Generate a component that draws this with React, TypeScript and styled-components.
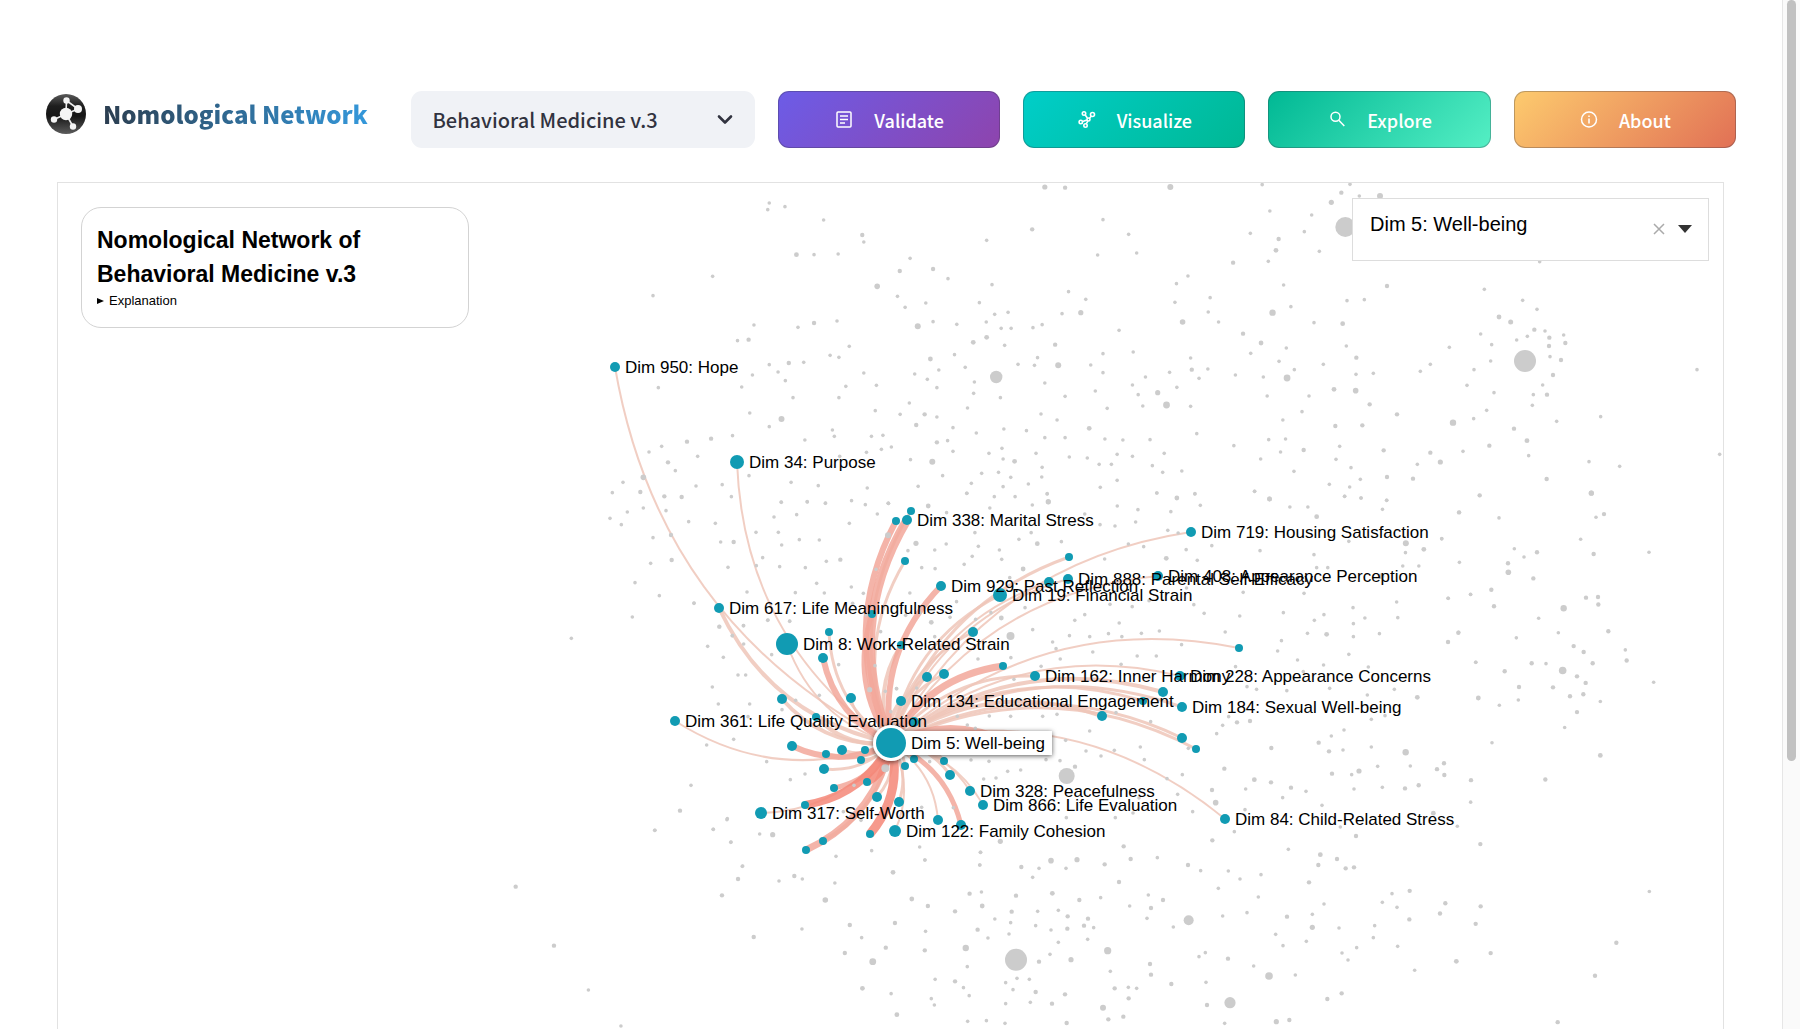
import React, { useState } from "react";
import styled, { createGlobalStyle } from "styled-components";

const GlobalStyle = createGlobalStyle`
  *, *::before, *::after { box-sizing: border-box; }
  body {
    margin: 0;
    background: #fff;
    color: #000;
    font-family: "Liberation Sans", Arial, sans-serif;
  }
`;

const uiFont = `"Noto Sans CJK JP", "Noto Sans", sans-serif`;

/* ---------- shell ---------- */

const Shell = styled.div`
  display: flex;
  height: 100vh;
  overflow: hidden;
`;

const Main = styled.main`
  flex: 1;
  min-width: 0;
  display: flex;
  flex-direction: column;
  padding: 91px 46px 0 45px;
`;

const ScrollRail = styled.div`
  width: 18px;
  padding: 0 4px;
  background: #fafafa;
  border-left: 1px solid #e6e6e6;
`;

const ScrollThumb = styled.div`
  height: 74%;
  border-radius: 5px;
  background: #c1c1c1;
`;

/* ---------- header ---------- */

const Header = styled.header`
  display: grid;
  grid-template-columns: 17fr 17fr 11fr 11fr 11fr 11fr;
  column-gap: 23px;
  height: 57px;
  margin-bottom: 34px;
  font-family: ${uiFont};
`;

const Brand = styled.a`
  display: flex;
  align-items: center;
  gap: 16px;
  height: 46px;
  text-decoration: none;
  white-space: nowrap;
`;

const BrandName = styled.span`
  font-size: 24px;
  line-height: 36px;
  font-weight: 900;
  color: transparent;
  background: linear-gradient(90deg, #2c3e50, #3498db);
  background-clip: text;
  -webkit-background-clip: text;
`;

const SelectWrap = styled.div`
  position: relative;
  display: grid;
`;

const VersionSelect = styled.select`
  appearance: none;
  width: 100%;
  padding: 0 56px 0 21px;
  border: 0;
  border-radius: 11px;
  background: #f0f2f6;
  color: #31333f;
  font: 500 20px / 28px ${uiFont};
`;

const SelectChevron = styled.svg`
  position: absolute;
  right: 22px;
  top: 21px;
  pointer-events: none;
`;

const NavButton = styled.button<{ $from: string; $to: string }>`
  display: flex;
  align-items: center;
  justify-content: center;
  gap: 20px;
  padding: 0;
  border: 1px solid rgba(49, 51, 63, 0.3);
  border-radius: 11px;
  background: linear-gradient(135deg, ${(p) => p.$from}, ${(p) => p.$to}) border-box;
  color: #fff;
  font: 500 18px / 28px ${uiFont};
  cursor: pointer;
`;

/* ---------- graph panel ---------- */

const Panel = styled.section`
  position: relative;
  flex: 1;
  min-height: 0;
  margin: 0 12px;
  border: 1px solid #e2e2e2;
  border-bottom: 0;
  overflow: hidden;
`;

const Graph = styled.svg`
  display: block;
  width: 100%;
  height: 100%;
`;

const NodeLabel = styled.text`
  font: 17px "Liberation Sans", Arial, sans-serif;
  fill: #000;
`;

const InfoCard = styled.aside`
  position: absolute;
  top: 24px;
  left: 23px;
  width: 388px;
  padding: 15px 15px 16px;
  border: 1px solid #d3d3d3;
  border-radius: 20px;
  background: #fff;
`;

const InfoTitle = styled.h1`
  max-width: 300px;
  margin: 0;
  font-size: 23px;
  line-height: 34px;
  font-weight: 700;
`;

const Explanation = styled.details`
  font-size: 13px;
  line-height: 20px;

  summary {
    display: flex;
    align-items: center;
    gap: 5px;
    list-style: none;
    cursor: pointer;
  }
`;

const DimPicker = styled.div`
  position: absolute;
  top: 15px;
  right: 14px;
  width: 357px;
  height: 63px;
  display: grid;
  border: 1px solid #ddd;
  background: #fff;
`;

const DimSelect = styled.select`
  appearance: none;
  width: 100%;
  padding: 0 90px 11px 17px;
  border: 0;
  background: transparent;
  color: #000;
  font: 20px / 24px "Liberation Sans", Arial, sans-serif;
`;

const ClearButton = styled.button`
  position: absolute;
  right: 41px;
  top: 21px;
  display: grid;
  place-items: center;
  width: 16px;
  height: 18px;
  padding: 0;
  border: 0;
  background: transparent;
  cursor: pointer;
`;

const DimCaret = styled.svg`
  position: absolute;
  right: 16px;
  top: 26px;
  pointer-events: none;
`;

/* ---------- graph data ---------- */

type Cluster = { x: number; y: number; sx: number; sy: number; dots: string };

// Background dimensions, grouped in clusters: "x,y" or "x,y,radius", in cluster units.
const clusters: Cluster[] = [
  {
    x: 700, y: 175, sx: 2.613, sy: 3,
    dots: `901,39,2.6 954,41,2.2 1229,39,3 1469,32 181,87 177,107 222,98 323,138 424,183,2.2 428,204 252,242,2.4 298,242 361,240 33,307
    549,253 522,291,2.2 609,285,2.2 648,314 463,337,2.8 763,332 749,199 868,166,2.2 1053,137 1120,181 1141,237 1039,243 1489,111 1438,178
    1512,195,2.2 1505,229,2.4 1393,266,2.2 1485,262 1525,333 1275,306 1245,329 1241,385 1333,371 1328,414 1355,444 1261,444,2.8 1496,416,3.2 1544,398
    516,367 536,400 590,387 730,386 569,457,3 609,443 671,451 770,421 805,415 748,444 787,463 813,463 870,461 894,452 946,419 995,416,2.6
    963,353 1008,376 1095,469 1419,479,2.2 1466,507,2.4 1439,538 1532,522 141,453 256,460 298,447,2.2 358,441 98,500 127,497,2.2 390,517
    340,544 363,550 714,505,2.4 749,490,2.4 796,514 928,512,2.2 882,551 874,574 936,574,3 831,571 774,609,6.2 693,580 665,542 602,555,2.4
    624,588 594,616 561,600 619,641 717,624 715,658 785,671 699,702 901,627 954,667 1033,651 1021,573 1053,539 1053,596 1132,534
    1282,552 1285,587,2.2 1327,585 1304,613 1227,595 1164,609 1130,633 1145,662 1196,656,2.6 1246,640 1219,693,3.4 1157,696 1282,697 1064,703
    1399,603 1472,609 1513,562 1553,587 1534,612,3.4 1482,666 1523,738 181,572 232,567,2.2 271,565 204,594 223,620 137,603 109,639 428,597
    381,637 461,634 243,671 363,671 213,735,3 130,717 181,758 85,785 29,794,2.2 547,687 458,710 523,721 587,721,2.2 619,729 565,753,2.2
    346,768 351,787 274,798 448,787 478,784 500,819 474,826 435,835 365,847 661,761 722,777 794,765 853,770 619,805,2.2 647,800 661,832
    550,857 607,863,3 634,905 755,838 789,823 792,855 822,862,2.4 878,838 891,720 933,738 1017,763,2.4 901,791 954,791 1058,795 1105,798
    1176,797 1298,779 1395,815 1213,838 1130,847 1090,841 1012,852 965,849 1043,871 1075,871 1182,875 1209,895 1259,891 1486,797 1530,795
    1517,834 1465,855 1552,892 894,880 893,909 858,930 812,910 780,895 736,898 709,928 792,938 769,968 697,958 907,960 910,983,2.6
    1090,919 1046,940 1194,957 1246,972,2.4 1293,960 1449,952 1488,975,2.4 128,905 238,925 309,935 58,932 82,968 437,942 570,937 212,984 280,983 396,980 328,987 492,988`,
  },
  {
    x: 1300, y: 175, sx: 3, sy: 3,
    dots: `150,31 124,56,2.2 94,85,2.6 178,66 240,66,3 35,123 13,173 136,159,10 58,232 719,263 261,336,2.2 141,380 193,377 553,346
    668,379 711,406 42,446 128,449,2.4 597,429,2.4 632,444,2.5 703,467,2.2 735,471 682,487 650,498 748,491,2.2 791,483 796,507,2.2 747,516,2.2 750,548
    783,558,2.2 675,561,11 542,480 575,512 572,561 522,587 501,634 582,656 759,603,2.2 728,633 741,662,2.2 700,662 697,694 448,520 139,516 169,551,2.2
    70,571 168,601 220,598 361,592 391,571 102,646,2.4 167,650,2.8 27,666 6,713 209,691,2.2 291,721,2.2 106,756,2.2 187,754,2.2 459,746,3.2
    521,734 560,709 642,764,2.2 681,800,2.4 686,845 770,742 902,728 1191,587 1259,841 568,815,2.2 489,832 421,864,2.6 391,836,2.2 352,871
    339,914,2.2 251,829,2.2 119,817 108,856 153,881 181,916 261,909,2.2 88,931 149,939 134,967 183,972 260,979 539,964,2.2 740,915,2.2 867,863
    959,877 874,957,2.6 11,828,2.2`,
  },
  {
    x: 560, y: 340, sx: 3, sy: 3,
    dots: `279,-130 295,146 267,339 305,322 324,370,2.2 346,395 381,308,2.2 413,352 408,441 365,474,2.2 313,472,2.2 241,459,2.2 250,415,2.8 189,430
    157,461 202,519 250,507 318,515 150,538 184,557 279,596 386,548 333,588,2.2 272,673 335,663,2.2 225,731 298,770 217,834 402,793 466,553
    482,609 521,609,2.2 504,685 588,580 608,656 655,580 665,618 718,602 778,603 589,680 659,683 736,686 799,667 841,662,2.2 770,733 706,761
    793,762 874,744 910,763 624,843 689,846 561,759 478,863,2.2 551,860 517,890 34,898 642,534 710,527 796,493 742,489 664,490 868,553 916,497
    952,525 985,493 984,589,3 948,691 878,793 918,828`,
  },
  {
    x: 880, y: 490, sx: 2.613, sy: 3,
    dots: `22,43 126,51,2.4 227,13 287,57 353,23 437,14 440,39,2.4 398,48 174,71 535,75 620,51 674,62 723,12 776,27 760,68 823,14 837,49
    979,7 1018,30,2.4 1071,54 1118,54 1141,83,2.4 1214,22 1257,27 1324,34 1313,61 1514,70 1468,149 575,107 614,111 668,99 752,124 779,132
    94,163,2.6 143,183 173,165 248,131 363,151 411,164,2.4 474,158 395,131 257,172 241,202 312,183 318,211 220,226 109,236 144,239 73,185
    374,240,2.4 339,266 587,210 649,165 689,173 748,208,2.4 829,214 800,182 867,170 993,185 1134,197 1225,157 1374,163,3 1373,191 1421,181,2.4
    1366,231 1310,262,3 1408,231 1514,220 1543,316 1485,328 1485,459 1512,430 1141,236 1170,236 949,310 1108,313 801,297 703,335 820,347 847,373
    940,381 1054,371 1135,394 1160,377 1236,356 1267,387 1237,404 1350,339 1353,386 1305,434 1167,436,2.4 1117,433 1237,443 902,429 730,426 625,402
    535,377 509,394 659,353 601,346 379,356 495,440 548,443 597,434 632,443 683,433 788,467 341,441,4 451,459 471,510 556,489 460,479 399,422
    317,387,2.4 250,391 290,371 134,400,2.4 143,443 183,385 104,372 67,379 78,312 200,338 1049,455 1039,486 1091,513 1225,496 1159,528 1106,548
    1276,534 929,533 672,501 722,501 630,526 421,532 256,510 342,506 350,571 43,599 438,548 1175,598 959,593 984,601 1063,605 1344,601
    1404,625,2.4 1557,520 1563,628`,
  },
  {
    x: 640, y: 600, sx: 3, sy: 3,
    dots: `162,12 383,64 449,67 310,80 238,83 277,110 311,135 203,142 250,175 395,167 294,228 317,228 217,264 235,315 329,315 324,353 467,304 426,332
    538,289 596,197 200,438 281,421 380,488 451,542 495,525 153,559 120,635,2.2 44,694 262,659 220,691 359,705 398,707,2.6 273,729 308,801
    588,772 695,755 736,508,4 642,559 663,664 610,638 752,338 770,269 736,277 689,272,2.6 722,98 705,200 839,744 855,783 1021,760 1019,798 1081,727,2.6
    845,625 940,626 1047,487 993,483 1068,537 1031,540 869,488 982,378 952,352 1048,351 1006,388 830,267`,
  },
  {
    x: 1000, y: 690, sx: 3, sy: 3,
    dots: `32,82 128,82 171,76 269,126 197,154 258,186 303,201 343,184 421,174 433,212 348,71 452,98 138,212 180,215 225,233,2.2 62,243 23,247
    200,261,8 501,269 547,257 533,316 578,368 647,341,2.8 636,303,2.2 673,239,2.2 737,300 763,272,2.4 813,280,2.2 873,296,2.2 848,326 918,307
    966,349 735,362 703,428 637,454,2.2 417,327 399,372 346,386 199,386 371,472,2.2 472,506 392,510,2.2 314,526,2.2 231,512,2.6 153,515,2.8
    198,538 117,538 64,534,2.2 98,565 157,613,2.4 48,620,2.2 238,633,2.2 302,626 357,579,2.2 445,618 489,633,2.2 453,657,2.2 389,651 441,688
    520,714 566,694,5 564,528,2.2 602,545 685,546 720,570 655,598 783,557 775,624 741,671 668,681 827,736 849,770 861,683,2.2 919,757 937,676
    937,715,2.6 972,645 927,580,2.2 955,528,2.2 961,497,2.4 1011,510,2.2 1037,538,2.2 1062,535,2.2 865,481 1068,441,2.2 1017,717 1026,792
    1044,813 1070,776 1120,746 1124,710 1147,640 1176,614 1191,655 1193,772 35,668,2.2 113,667 175,664 203,682,2.2 264,689,2.2 252,710,2.2 281,716
    202,719,2.2 153,723 107,710 32,701 27,735 175,760 263,751 150,796 117,818,2.2 213,812,2.6 323,785,3.6 48,812,11 51,868 88,871 17,881 39,902
    107,909,2.2 195,916,2.2 156,944,2.2 91,940 17,944 344,898,2.2 385,895 410,898 386,928,2.2 331,847 453,857,2.2 450,825,2.2 514,885,2.2 597,803
    616,791 684,809,2.2 761,831 618,880 621,948,2.2 690,941,5.6 807,861,3.8 886,858 982,930,2.2 1025,913,2.2 829,998,2.6 868,993,2.2 674,1003
    309,956,3 325,991,2.2 370,983,2.2 200,1002,2.2 15,1003 650,134 668,109 686,83 711,100,2.2 750,96,2.2 814,177,2.2 956,161,2.2 994,141
    1032,123 987,187,2.2 1029,183 1114,174 1155,80 1114,91 1102,18 1055,257 1077,246,2.6 996,254,2.2 1133,232 1062,300 1147,295 565,178 1021,414`,
  },
  {
    x: 500, y: 820, sx: 2.613, sy: 3,
    dots: `41,203,2.2 141,380,2.2 231,513 316,621 405,34 557,31 593,2 603,70 633,142 622,180,2.2 580,229,2.2 663,354,2.2 789,330 729,186 769,171,2.2
    790,180 875,192 850,243,2.8 1027,160,2.4 1110,123 1076,240,2.4 1118,261,2.2 1189,277,2.2 1032,312,2.2 1112,337 1008,386,2.2 1110,394,2.2
    914,318,2.2 945,356 901,402,2.2 974,428,3.4 947,508,2.4 1022,524 1037,587,2.4 1217,387,3.2 1221,443 1137,481 1189,487,2.2 1211,506 1226,530
    1127,539 1135,558 1222,607 1271,605 1227,224,2.2 1258,219 1260,261,2.4 1293,300 1248,332,2.2 1275,357 1254,138 1256,100`,
  },
  {
    x: 1400, y: 490, sx: 3, sy: 2.909,
    dots: `574,12,2.6 612,73,2.2 588,82 542,146 581,189,2.2 747,184 239,19 177,68,2.2 297,84 125,145 343,174 372,198 411,184,2.2 324,216,2.2
    325,242,2.8 400,260,2.2 274,293,2.2 212,307 144,318 282,341,2.2 491,347,3.2 558,316,2.2 594,314,2.2 595,336,2.2 416,376 475,418 625,414,2.2
    349,433 175,418,2.2 144,445,2.2 227,504 314,530,2.2 395,507,2.2 438,508 488,528,3.8 521,457,2.2 551,474,2.2 578,507,2.2 676,468 680,499,2.2
    761,562 531,545,2.2 557,564,2.2 459,577,2.2 357,576,2.2 510,603,2.2 550,597,2.2 601,618 531,649,2.2 355,614 298,629 235,608,2.4 494,694 276,738
    601,775,2.4 436,845,2.2 17,766,3.2 31,806 111,815,2.2 132,798,2.2 133,832,2.2 213,847,2.2 56,862,2.2 15,871,2.2 212,911 100,943,2.4 172,981
    241,1033,2.2 29,1169,2.2 136,1205,2.2 120,1235,2.2 28,1252,2.2 242,1214,2.2 227,1265,2.2 272,1350,2.2 169,1374,2.4 44,1400 649,1320,2.2
    748,1171 585,1416,2.2 473,1551,2.2`,
  },
];

const greyDots = clusters.flatMap((c) =>
  c.dots.trim().split(/\s+/).map((entry) => {
    const [px, py, r = 1.8] = entry.split(",").map(Number);
    return { x: c.x + px / c.sx, y: c.y + py / c.sy, r };
  })
);

type Node = { x: number; y: number; r: number; w: number; heat: 0 | 1 | 2; label?: string };

const n = (x: number, y: number, r: number, w: number, heat: 0 | 1 | 2 = 0, label?: string): Node => ({
  x, y, r, w, heat, label,
});

const HUB = { x: 891, y: 744, r: 15 };
const heatColors = ["#efc5b9", "#f2a79a", "#f48778"];

const nodes: Node[] = [
  n(615, 368, 5, 2, 0, "Dim 950: Hope"),
  n(737, 463, 7, 2, 0, "Dim 34: Purpose"),
  n(896, 522, 4, 6, 1),
  n(911, 512, 4, 3),
  n(907, 521, 5, 9, 1, "Dim 338: Marital Stress"),
  n(905, 562, 4, 3),
  n(941, 587, 5, 6, 1, "Dim 929: Past Reflection"),
  n(719, 609, 5, 4, 0, "Dim 617: Life Meaningfulness"),
  n(872, 615, 4, 5, 1),
  n(829, 633, 4, 3),
  n(1191, 533, 5, 2, 0, "Dim 719: Housing Satisfaction"),
  n(1069, 558, 4, 3),
  n(1158, 577, 5, 2, 0, "Dim 408: Appearance Perception"),
  n(1068, 580, 5, 2, 0, "Dim 888: Parental Self-Efficacy"),
  n(1049, 583, 5, 2),
  n(1000, 596, 7, 3, 0, "Dim 19: Financial Strain"),
  n(973, 633, 5, 3),
  n(901, 646, 4, 4),
  n(1239, 649, 4, 2),
  n(1003, 667, 4, 7, 1),
  n(927, 678, 5, 3),
  n(944, 675, 5, 3),
  n(1035, 677, 5, 3, 0, "Dim 162: Inner Harmony"),
  n(1180, 677, 5, 2, 0, "Dim 228: Appearance Concerns"),
  n(1163, 693, 5, 4),
  n(1182, 708, 5, 3, 0, "Dim 184: Sexual Well-being"),
  n(1143, 702, 4, 3),
  n(1102, 717, 5, 4),
  n(1182, 739, 5, 3),
  n(1196, 750, 4, 3),
  n(1010, 744, 4, 6, 1),
  n(901, 702, 5, 4, 0, "Dim 134: Educational Engagement"),
  n(914, 723, 5, 4),
  n(787, 645, 11, 2, 0, "Dim 8: Work-Related Strain"),
  n(823, 659, 5, 6, 1),
  n(851, 699, 5, 2),
  n(782, 700, 5, 4),
  n(816, 718, 4, 4),
  n(675, 722, 5, 2, 0, "Dim 361: Life Quality Evaluation"),
  n(792, 747, 5, 6, 1),
  n(826, 755, 4, 4),
  n(842, 751, 5, 3),
  n(865, 751, 4, 3),
  n(861, 761, 4, 3),
  n(824, 770, 5, 3),
  n(834, 789, 4, 5, 1),
  n(867, 783, 4, 9, 2),
  n(805, 806, 4, 8, 2),
  n(761, 814, 6, 2, 0, "Dim 317: Self-Worth"),
  n(877, 798, 5, 3),
  n(899, 803, 5, 3),
  n(870, 835, 4, 9, 2),
  n(895, 832, 6, 2, 0, "Dim 122: Family Cohesion"),
  n(823, 842, 4, 4),
  n(806, 851, 4, 7, 1),
  n(905, 767, 4, 3),
  n(914, 760, 4, 3),
  n(944, 762, 4, 4),
  n(950, 776, 5, 3),
  n(970, 792, 5, 2, 0, "Dim 328: Peacefulness"),
  n(983, 806, 5, 2, 0, "Dim 866: Life Evaluation"),
  n(938, 821, 5, 2),
  n(961, 826, 5, 5, 1),
  n(1225, 820, 5, 2, 0, "Dim 84: Child-Related Stress"),
];

// Each edge bends by a quarter of its length, always to the same side of the hub.
const edgePath = (t: Node) => {
  const cx = (HUB.x + t.x) / 2 + (t.y - HUB.y) / 4;
  const cy = (HUB.y + t.y) / 2 + (HUB.x - t.x) / 4;
  return `M${HUB.x} ${HUB.y}Q${cx} ${cy} ${t.x} ${t.y}`;
};

const NetworkGraph = () => (
  <Graph viewBox="58 184 1665 846" preserveAspectRatio="xMidYMin slice" role="img" aria-label="Nomological network graph">
    <defs>
      <filter id="hubShadow" x="-30%" y="-30%" width="160%" height="170%">
        <feDropShadow dx="0" dy="1" stdDeviation="2.5" floodColor="#000" floodOpacity="0.65" />
      </filter>
    </defs>
    <g fill="none">
      {[...nodes].sort((a, b) => a.heat - b.heat).map((t, i) => (
        <path key={i} d={edgePath(t)} stroke={heatColors[t.heat]} strokeWidth={t.w} strokeOpacity={0.85} />
      ))}
    </g>
    <g fill="#ccc">
      {greyDots.map((d, i) => (
        <circle key={i} cx={d.x} cy={d.y} r={d.r} />
      ))}
    </g>
    <g fill="#119bb3">
      {nodes.map((t, i) => (
        <circle key={i} cx={t.x} cy={t.y} r={t.r} />
      ))}
    </g>
    {nodes.filter((t) => t.label).map((t) => (
      <NodeLabel key={t.label} x={t.x + t.r + 5} y={t.y + 6}>{t.label}</NodeLabel>
    ))}
    <g filter="url(#hubShadow)" fill="#fff">
      <rect x={HUB.x} y={HUB.y - 12} width="161" height="24" />
      <circle cx={HUB.x} cy={HUB.y} r={HUB.r + 3} />
    </g>
    <circle cx={HUB.x} cy={HUB.y} r={HUB.r} fill="#119bb3" />
    <NodeLabel x={HUB.x + HUB.r + 5} y={HUB.y + 6}>Dim 5: Well-being</NodeLabel>
  </Graph>
);

/* ---------- icons ---------- */

const Logo = () => (
  <svg width="42" height="42" viewBox="0 0 42 42" aria-hidden="true">
    <defs>
      <linearGradient id="logoFill" x1="0" y1="0" x2="0" y2="1">
        <stop offset="0" stopColor="#5a5a5a" />
        <stop offset="0.3" stopColor="#1e1e1e" />
        <stop offset="0.55" stopColor="#161616" />
        <stop offset="1" stopColor="#5c5c5c" />
      </linearGradient>
    </defs>
    <circle cx="21" cy="21" r="20" fill="url(#logoFill)" />
    <path d="M21 21L21.500 7.500L33 16M21 21L33 16M21 21L9 26.500M21 21L28 33.500" fill="none" stroke="#eee" strokeWidth="1.6" />
    <g fill="#f4f4f4">
      <circle cx="21" cy="21" r="6.200" />
      <circle cx="21.500" cy="7.500" r="3.200" />
      <circle cx="33" cy="16" r="4" />
      <circle cx="9" cy="26.500" r="3.200" />
      <circle cx="28" cy="33.500" r="3.200" />
    </g>
  </svg>
);

const Icon = ({ children }: { children: React.ReactNode }) => (
  <svg width="20" height="20" viewBox="0 0 20 20" fill="none" stroke="#fff" strokeWidth="1.5" aria-hidden="true">
    {children}
  </svg>
);

const ArticleIcon = () => (
  <Icon>
    <rect x="3" y="2" width="14" height="15" rx="1" />
    <path d="M6 6h8M6 9.500h8M6 13h5" />
  </Icon>
);

const GraphIcon = () => (
  <Icon>
    <g strokeWidth="1.600">
      <circle cx="7" cy="3.500" r="1.700" />
      <circle cx="15.500" cy="4.500" r="2" />
      <circle cx="11.500" cy="9.500" r="1.500" />
      <circle cx="3.800" cy="12" r="1.700" />
      <circle cx="8.500" cy="15.500" r="1.700" />
      <path d="M8.200 5l2.200 3M14.200 6.300l-1.700 2M9.900 10l-4.300 1.500M10.800 11.100l-1.600 2.800" />
    </g>
  </Icon>
);

const SearchIcon = () => (
  <Icon>
    <circle cx="8.500" cy="6.800" r="4.500" />
    <path d="M11.800 10.200l5.500 5.800" />
  </Icon>
);

const InfoIcon = () => (
  <Icon>
    <circle cx="10" cy="9.500" r="7.500" />
    <path d="M10 8.500v5M10 5.500v1.600" />
  </Icon>
);

const navItems = [
  { label: "Validate", from: "#6c5ce7", to: "#8e44ad", icon: <ArticleIcon /> },
  { label: "Visualize", from: "#00cec9", to: "#00b894", icon: <GraphIcon /> },
  { label: "Explore", from: "#00b894", to: "#55efc4", icon: <SearchIcon /> },
  { label: "About", from: "#fdcb6e", to: "#e17055", icon: <InfoIcon /> },
];

const HUB_LABEL = "Dim 5: Well-being";

export default function App() {
  const [dim, setDim] = useState(HUB_LABEL);

  return (
    <>
      <GlobalStyle />
      <Shell>
        <Main>
          <Header>
            <Brand href="#">
              <Logo />
              <BrandName>Nomological Network</BrandName>
            </Brand>
            <SelectWrap>
              <VersionSelect aria-label="Network version" defaultValue="bm3">
                <option value="bm3">Behavioral Medicine v.3</option>
              </VersionSelect>
              <SelectChevron width="16" height="16" viewBox="0 0 16 16" fill="none" stroke="#31333f" strokeWidth="2.6" strokeLinecap="round" strokeLinejoin="round" aria-hidden="true">
                <path d="M2 4.500l6 6 6-6" />
              </SelectChevron>
            </SelectWrap>
            {navItems.map((item) => (
              <NavButton key={item.label} type="button" $from={item.from} $to={item.to}>
                {item.icon}
                {item.label}
              </NavButton>
            ))}
          </Header>
          <Panel>
            <NetworkGraph />
            <InfoCard>
              <InfoTitle>Nomological Network of Behavioral Medicine v.3</InfoTitle>
              <Explanation>
                <summary>
                  <svg width="7" height="6" viewBox="0 0 7 6" aria-hidden="true">
                    <path d="M0 0L7 3L0 6z" />
                  </svg>
                  Explanation
                </summary>
              </Explanation>
            </InfoCard>
            <DimPicker>
              <DimSelect aria-label="Dimension" value={dim} onChange={(e) => setDim(e.target.value)}>
                <option value=""></option>
                <option>{HUB_LABEL}</option>
                {nodes.filter((t) => t.label).map((t) => (
                  <option key={t.label}>{t.label}</option>
                ))}
              </DimSelect>
              <ClearButton type="button" aria-label="Clear dimension" onClick={() => setDim("")}>
                <svg width="12" height="12" viewBox="0 0 12 12" stroke="#aaa" strokeWidth="1.5" aria-hidden="true">
                  <path d="M1 1l10 10M11 1L1 11" />
                </svg>
              </ClearButton>
              <DimCaret width="14" height="8" viewBox="0 0 14 8" fill="#333" aria-hidden="true">
                <path d="M0 0h14L7 8z" />
              </DimCaret>
            </DimPicker>
          </Panel>
        </Main>
        <ScrollRail aria-hidden="true">
          <ScrollThumb />
        </ScrollRail>
      </Shell>
    </>
  );
}
